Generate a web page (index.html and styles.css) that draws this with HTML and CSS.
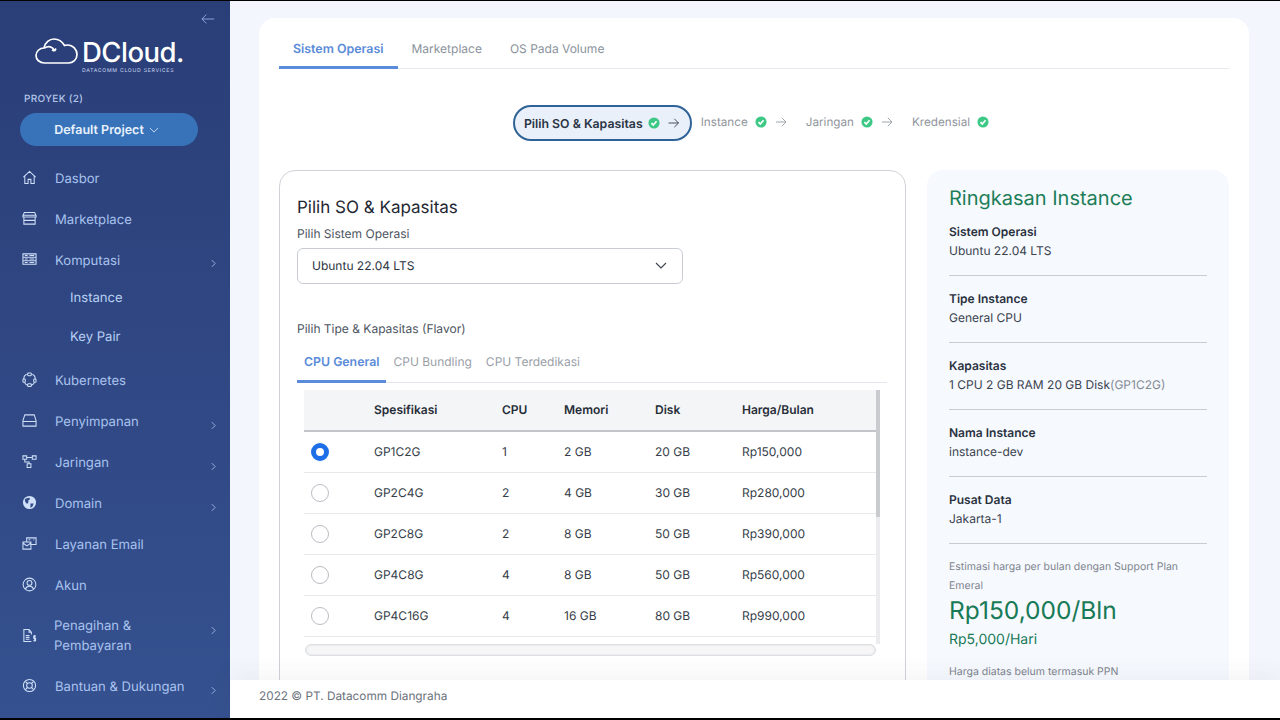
FILE: index.html
```html
<!DOCTYPE html>
<html lang="id">
<head>
<meta charset="utf-8">
<title>DCloud</title>
<link rel="stylesheet" href="styles.css">
</head>
<body>
<div class="app">
  <aside class="sidebar">
    <div class="collapse-row">
      <svg class="collapse" viewBox="0 0 16 12"><path d="M15 6H1M6 1 1 6l5 5"/></svg>
    </div>
    <div class="logo">
      <svg class="logo-cloud" viewBox="0 0 44 28"><path d="M11 26H10C5 26 1.500 22.500 1.500 18.500S5 11 9.500 11C10.500 5.500 15 2 19.500 2 24.500 2 28 5 30 8.500 31 8 32 8 33 8 38.500 8 42.500 12.500 42.500 17.500S38.500 26 34 26Z"/><path d="M10 11C14 8.500 18 9.500 20 13.500M20 14l-2.500-1M20 14l1.500-2.500"/></svg>
      <div class="logo-text">
        <div class="logo-name">DCloud.</div>
        <div class="logo-sub">DATACOMM CLOUD SERVICES</div>
      </div>
    </div>
    <div class="project-label">PROYEK (2)</div>
    <button class="project-btn">Default Project <svg class="chev-down" viewBox="0 0 12 7"><path d="M1 1l5 5 5-5"/></svg></button>
    <nav class="menu">
      <a class="item"><svg class="ico" viewBox="0 0 16 16"><path d="M1.500 7.500 8 1.500l6.500 6M3 6.500V14.500H6.500V10H9.500V14.500H13V6.500"/></svg><span>Dasbor</span></a>
      <a class="item"><svg class="ico" viewBox="0 0 16 16"><path d="M2.500 1.500H13.500L15 5V6.500H1V5ZM1 4.500H15M2 6.500V14H14V6.500M2 10H14"/></svg><span>Marketplace</span></a>
      <a class="item"><svg class="ico" viewBox="0 0 16 16"><path d="M1 2H15V13H1ZM1 5.600H15M1 9.300H15M3 3.800H6M3 7.500H6M3 11.200H6M8 3.800H13M8 7.500H13M8 11.200H13"/></svg><span>Komputasi</span><svg class="chev" viewBox="0 0 6 10"><path d="M1 1l4 4-4 4"/></svg></a>
      <a class="sub sub-first">Instance</a>
      <a class="sub sub-last">Key Pair</a>
      <a class="item"><svg class="ico" viewBox="0 0 16 16"><path d="M5 2.500C2.800 3.500 1.800 5.500 2 7.500M11 2.500C13.200 3.500 14.200 5.500 14 7.500M2.500 11C3.500 13 5 14 6.500 14.200M13.500 11C12.500 13 11 14 9.500 14.200"/><rect x="6" y="1" width="4" height="3" rx="1"/><rect x="6" y="12.500" width="4" height="3" rx="1"/><rect x="1" y="7.500" width="2.500" height="3.500" rx="1"/><rect x="12.500" y="7.500" width="2.500" height="3.500" rx="1"/></svg><span>Kubernetes</span></a>
      <a class="item"><svg class="ico" viewBox="0 0 16 16"><path d="M3 2H13L15 8V14H1V8ZM1 9H15"/></svg><span>Penyimpanan</span><svg class="chev" viewBox="0 0 6 10"><path d="M1 1l4 4-4 4"/></svg></a>
      <a class="item"><svg class="ico" viewBox="0 0 16 16"><path d="M1 2H5V5.500H1ZM11 2H15V5.500H11ZM5.500 10.500H9.500V14.500H5.500ZM5 3.800H11M3 5.500V8.500H7.500V10.500"/></svg><span>Jaringan</span><svg class="chev" viewBox="0 0 6 10"><path d="M1 1l4 4-4 4"/></svg></a>
      <a class="item"><svg class="ico ico-fill" viewBox="0 0 16 16"><path d="M8 1a7 7 0 1 0 0 14A7 7 0 0 0 8 1ZM3 4.500 5 3.500 8 3 8.500 4.500 6.500 6 7 7.500 5.500 9.500 3.500 7.500ZM9 9l3.500 0L11 12.500 9 13.500Z" fill-rule="evenodd"/></svg><span>Domain</span><svg class="chev" viewBox="0 0 6 10"><path d="M1 1l4 4-4 4"/></svg></a>
      <a class="item"><svg class="ico" viewBox="0 0 16 16"><path d="M5 6V2H15V9H10M1 6.500H9.500V14H1ZM1 7.500 5.200 10.500 9.500 7.500M7 4H9M12 4H13"/></svg><span>Layanan Email</span></a>
      <a class="item"><svg class="ico" viewBox="0 0 16 16"><circle cx="8" cy="8" r="6.800"/><circle cx="8" cy="6.300" r="2.600"/><path d="M3.500 13C4.500 10.500 6 9.800 8 9.800S11.500 10.500 12.500 13"/></svg><span>Akun</span></a>
      <a class="item item-tall"><svg class="ico" viewBox="0 0 16 16"><path d="M10 14.500H2V1.500H7.500L10 4.500V7M7.500 1.500V4.500H10M4 8H8M4 10H8M4 12H8"/><path d="M15 8.500H12.500V11H14.500V13.500H12M13.500 7.500V14.500"/></svg><span class="two-line">Penagihan &amp; Pembayaran</span><svg class="chev" viewBox="0 0 6 10"><path d="M1 1l4 4-4 4"/></svg></a>
      <a class="item"><svg class="ico" viewBox="0 0 16 16"><circle cx="8" cy="8" r="6.500"/><circle cx="8" cy="8" r="3"/><path d="M3.500 3.500 6 6M12.500 3.500 10 6M3.500 12.500 6 10M12.500 12.500 10 10"/></svg><span>Bantuan &amp; Dukungan</span><svg class="chev" viewBox="0 0 6 10"><path d="M1 1l4 4-4 4"/></svg></a>
    </nav>
  </aside>
  <div class="main">
    <div class="scroll">
      <section class="card">
        <div class="tabs">
          <span class="tab active">Sistem Operasi</span>
          <span class="tab">Marketplace</span>
          <span class="tab">OS Pada Volume</span>
        </div>
        <div class="stepper">
          <div class="step current">Pilih SO &amp; Kapasitas<svg class="check" viewBox="0 0 14 14"><circle cx="7" cy="7" r="6.500"/><path d="M4 7.200 6.100 9.300 10 5"/></svg><svg class="arrow" viewBox="0 0 14 12"><path d="M1 6H13M8 1l5 5-5 5"/></svg></div>
          <div class="step">Instance<svg class="check" viewBox="0 0 14 14"><circle cx="7" cy="7" r="6.500"/><path d="M4 7.200 6.100 9.300 10 5"/></svg><svg class="arrow" viewBox="0 0 14 12"><path d="M1 6H13M8 1l5 5-5 5"/></svg></div>
          <div class="step">Jaringan<svg class="check" viewBox="0 0 14 14"><circle cx="7" cy="7" r="6.500"/><path d="M4 7.200 6.100 9.300 10 5"/></svg><svg class="arrow" viewBox="0 0 14 12"><path d="M1 6H13M8 1l5 5-5 5"/></svg></div>
          <div class="step">Kredensial<svg class="check" viewBox="0 0 14 14"><circle cx="7" cy="7" r="6.500"/><path d="M4 7.200 6.100 9.300 10 5"/></svg></div>
        </div>
        <div class="columns">
          <div class="panel">
            <h2 class="panel-title">Pilih SO &amp; Kapasitas</h2>
            <div class="field-label">Pilih Sistem Operasi</div>
            <div class="select">Ubuntu 22.04 LTS <svg class="select-chev" viewBox="0 0 12 7"><path d="M1 1l5 5 5-5"/></svg></div>
            <div class="flavor-label">Pilih Tipe &amp; Kapasitas (Flavor)</div>
            <div class="subtabs">
              <span class="subtab active">CPU General</span>
              <span class="subtab">CPU Bundling</span>
              <span class="subtab">CPU Terdedikasi</span>
            </div>
            <div class="table-wrap">
              <div class="table-scroll">
                <table class="flavors">
                  <thead>
                    <tr><th class="c-radio"></th><th class="c-spec">Spesifikasi</th><th class="c-cpu">CPU</th><th class="c-mem">Memori</th><th class="c-disk">Disk</th><th>Harga/Bulan</th></tr>
                  </thead>
                  <tbody>
                    <tr><td><span class="radio on"></span></td><td>GP1C2G</td><td>1</td><td>2 GB</td><td>20 GB</td><td>Rp150,000</td></tr>
                    <tr><td><span class="radio"></span></td><td>GP2C4G</td><td>2</td><td>4 GB</td><td>30 GB</td><td>Rp280,000</td></tr>
                    <tr><td><span class="radio"></span></td><td>GP2C8G</td><td>2</td><td>8 GB</td><td>50 GB</td><td>Rp390,000</td></tr>
                    <tr><td><span class="radio"></span></td><td>GP4C8G</td><td>4</td><td>8 GB</td><td>50 GB</td><td>Rp560,000</td></tr>
                    <tr><td><span class="radio"></span></td><td>GP4C16G</td><td>4</td><td>16 GB</td><td>80 GB</td><td>Rp990,000</td></tr>
                  </tbody>
                </table>
                <div class="hbar"></div>
              </div>
              <div class="vbar"><div class="vthumb"></div></div>
            </div>
          </div>
          <aside class="summary">
            <h2 class="summary-title">Ringkasan Instance</h2>
            <div class="sum-block"><div class="sum-key">Sistem Operasi</div><div class="sum-val">Ubuntu 22.04 LTS</div></div>
            <div class="sum-block"><div class="sum-key">Tipe Instance</div><div class="sum-val">General CPU</div></div>
            <div class="sum-block"><div class="sum-key">Kapasitas</div><div class="sum-val">1 CPU 2 GB RAM 20 GB Disk<span class="muted">(GP1C2G)</span></div></div>
            <div class="sum-block"><div class="sum-key">Nama Instance</div><div class="sum-val">instance-dev</div></div>
            <div class="sum-block"><div class="sum-key">Pusat Data</div><div class="sum-val">Jakarta-1</div></div>
            <p class="estimate">Estimasi harga per bulan dengan Support Plan Emeral</p>
            <div class="price">Rp150,000/Bln</div>
            <div class="price-day">Rp5,000/Hari</div>
            <p class="note">Harga diatas belum termasuk PPN</p>
          </aside>
        </div>
      </section>
    </div>
    <footer class="footer">2022 © PT. Datacomm Diangraha</footer>
  </div>
</div>
</body>
</html>
```
FILE: styles.css
```css
* { box-sizing: border-box; }
html, body { margin: 0; height: 100%; background: #000; overflow: hidden; }
body { font-family: Inter, "Liberation Sans", sans-serif; padding: 1px 0 2px; text-rendering: geometricPrecision; }
.app { display: flex; height: 717px; overflow: hidden; background: #f3f6fc; }

.sidebar { width: 230px; flex: none; background: linear-gradient(180deg, #2a3e78 0%, #35518f 100%); color: #a9c3ee; display: flex; flex-direction: column; }
.collapse-row { display: flex; justify-content: flex-end; padding: 12px 15px 0 0; height: 36px; }
.collapse { width: 14px; height: 12px; fill: none; stroke: #8fa8dc; stroke-width: 1.100; }
.logo { display: flex; gap: 3px; padding-left: 34px; height: 38px; color: #fff; }
.logo-cloud { width: 45px; height: 28px; fill: none; stroke: #fff; stroke-width: 1.700; flex: none; }
.logo-name { font-size: 27.500px; font-weight: 500; line-height: 28px; letter-spacing: -.5px; margin-top: 1px; }
.logo-sub { font-size: 5.200px; letter-spacing: .7px; color: #c9d6f0; line-height: 8px; margin-top: 1px; white-space: nowrap; }
.project-label { font-size: 10px; font-weight: 500; letter-spacing: .3px; color: #b4c6e8; padding-left: 24px; margin-top: 17px; line-height: 14px; }
.project-btn { display: flex; align-items: center; justify-content: center; gap: 5px; margin: 7px 0 0 20px; padding: 1px 5px 0 0; width: 178px; height: 33px; border: 0; border-radius: 17px; background: #3873b9; color: #e8f1fc; font: 600 12.500px Inter, sans-serif; text-rendering: geometricPrecision; }
.chev-down { width: 10px; height: 6px; fill: none; stroke: #dce9fa; stroke-width: 1; }
.menu { display: flex; flex-direction: column; margin-top: 12px; }
.item { display: flex; align-items: center; height: 41px; padding-left: 22px; position: relative; font-size: 13.100px; color: #a9c3ee; }
.item > span { margin-left: 18px; }
.ico { width: 15px; height: 15px; flex: none; fill: none; stroke: #cfe0f8; stroke-width: 1.100; margin-top: -3px; }
.ico-fill { fill: #cfe0f8; stroke: none; }
.chev { width: 5px; height: 9px; fill: none; stroke: #a9c3ee; stroke-width: 1; position: absolute; left: 211px; top: 19px; }
.sub { display: block; padding-left: 70px; font-size: 13.100px; color: #b9d0f3; }
.sub-first { height: 38.500px; line-height: 34px; }
.sub-last { height: 41px; line-height: 34px; }
.item-tall { height: 60px; padding-bottom: 2px; line-height: 20px; }
.item-tall > span { margin-left: 17px; width: 120px; }
.item-tall .ico { margin-top: 0; }
.item-tall .chev { top: 19px; }

.main { flex: 1; min-width: 0; display: flex; flex-direction: column; }
.scroll { flex: 1; min-height: 0; overflow: hidden; padding: 17px 31px 0 29px; }
.card { background: #fff; border-radius: 16px; padding: 12px 20px 0; height: 800px; }
.tabs { display: flex; border-bottom: 1px solid #e6e9ed; height: 39px; }
.tab { padding: 0 14px; height: 39px; line-height: 37px; font-size: 12px; color: #8b929b; }
.tab.active { color: #5a8bd8; font-weight: 600; font-size: 12.400px; border-bottom: 3px solid #5b8cdc; }
.stepper { display: flex; justify-content: center; align-items: flex-start; margin-top: 36px; height: 65px; padding-right: 6px; }
.step { display: flex; align-items: center; height: 33px; font-size: 11.700px; color: #8f959c; gap: 7px; }
.step.current { height: 36px; padding: 0 10px 0 9px; border: 2px solid #2f6397; border-radius: 18px; background: #e9f0f9; color: #2a3344; font-weight: 600; font-size: 12.300px; gap: 5px; margin-right: 9px; }
.check { width: 12px; height: 12px; fill: #3dc985; stroke: none; flex: none; }
.check path { fill: none; stroke: #fff; stroke-width: 2; }
.arrow { width: 12px; height: 10px; fill: none; stroke: #8f959c; stroke-width: 1; flex: none; margin-left: 1px; margin-right: 19px; }
.current .arrow { stroke: #2a3344; margin: 0 0 0 2px; width: 13px; }
.columns { display: flex; gap: 21px; align-items: flex-start; }
.panel { width: 628px; height: 600px; border: 1px solid #cfd3d8; border-radius: 16px; padding: 26px 17px 0; }
.panel-title { margin: 0; font-size: 17px; font-weight: 400; line-height: 22px; color: #1f2733; }
.field-label { font-size: 12px; color: #4c5561; margin-top: 6px; line-height: 18px; }
.select { display: flex; align-items: center; justify-content: space-between; width: 386px; height: 36px; margin-top: 5px; padding: 0 15px 2px 14px; border: 1px solid #c9cdd3; border-radius: 6px; font-size: 12px; color: #2b3340; }
.select-chev { width: 12px; height: 7px; fill: none; stroke: #3a4350; stroke-width: 1.100; }
.flavor-label { font-size: 12px; color: #4c5561; margin-top: 36px; line-height: 18px; }
.subtabs { display: flex; margin-top: 11px; height: 34px; border-bottom: 1px solid #e3e6ea; width: 590px; }
.subtab { padding: 0 7px; height: 34px; line-height: 26px; font-size: 12px; color: #9aa0a8; }
.subtab.active { color: #5a8bd8; font-weight: 600; font-size: 12.300px; border-bottom: 3px solid #5b8cdc; }
.table-wrap { display: flex; margin: 7px 0 0 7px; width: 576px; }
.table-scroll { width: 572px; }
.flavors { width: 572px; border-collapse: collapse; table-layout: fixed; font-size: 12px; color: #363e49; }
.flavors th { height: 41px; background: #f4f5f6; border-bottom: 2px solid #c2c5c9; text-align: left; font-weight: 600; color: #262d38; font-size: 12px; padding: 0 0 2px; }
.flavors td { height: 41px; border-bottom: 1px solid #e7e9ec; padding: 0; }
.c-radio { width: 70px; }
.c-spec { width: 128px; }
.c-cpu { width: 62px; }
.c-mem { width: 91px; }
.c-disk { width: 87px; }
.radio { display: block; width: 18px; height: 18px; margin-left: 7px; border: 1px solid #b9bdc3; border-radius: 50%; background: #fff; }
.radio.on { border: 5px solid #1c6fe6; }
.hbar { height: 12px; margin: 7px 0 0 1px; border: 1px solid #dcdfe2; border-radius: 6px; background: #f6f6f7; box-shadow: inset 0 0 2px #d4d6d9; }
.vbar { width: 4px; height: 254px; background: #ececee; }
.vthumb { height: 127px; background: #c9cbcf; }
.summary { width: 302px; height: 600px; background: #f6f9fe; border-radius: 16px; padding: 16px 22px 0; }
.summary-title { margin: 0 0 12px; font-size: 20px; font-weight: 400; line-height: 24px; color: #1d7e58; }
.sum-block { height: 54px; border-bottom: 1px solid #c9cdd2; margin-bottom: 13px; line-height: 19px; font-size: 12px; width: 258px; }
.sum-key { font-weight: 600; color: #2a323e; }
.sum-val { color: #3b434f; }
.muted { color: #848b95; }
.estimate { margin: 0; font-size: 10.500px; line-height: 19px; color: #7f858e; width: 258px; }
.price { font-size: 24.500px; font-weight: 400; line-height: 30px; color: #187a56; }
.price-day { font-size: 14px; font-weight: 400; line-height: 18px; color: #187a56; margin-top: 6px; }
.note { margin: 16px 0 0; font-size: 10.500px; color: #7f858e; line-height: 14px; }
.footer { height: 38px; flex: none; background: #fff; line-height: 33px; padding-left: 29px; font-size: 11.800px; color: #6b727c; position: relative; box-shadow: 0 -6px 24px rgba(60, 70, 90, .06); }
```
